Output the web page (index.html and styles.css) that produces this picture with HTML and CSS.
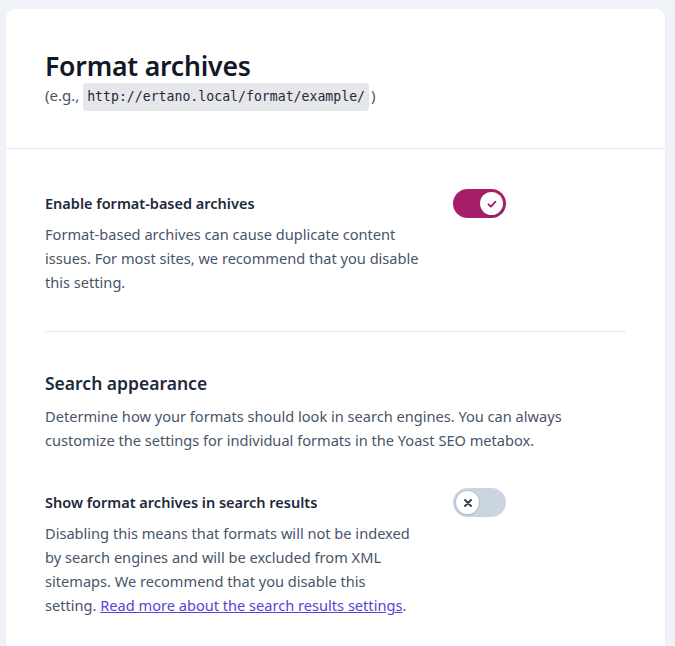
FILE: index.html
```html
<!DOCTYPE html>
<html lang="en">
<head>
<meta charset="utf-8">
<title>Format archives</title>
<link rel="stylesheet" href="styles.css">
</head>
<body>
<main class="card">
  <header class="card-header">
    <h1 class="title">Format archives</h1>
    <p class="subtitle">(e.g., <code class="code">http://ertano.local/format/example/</code>)</p>
  </header>
  <div class="card-body">
    <div class="setting">
      <div class="setting-text">
        <h3 class="setting-label">Enable format-based archives</h3>
        <p class="setting-desc">Format-based archives can cause duplicate content issues. For most sites, we recommend that you disable this setting.</p>
      </div>
      <button class="toggle toggle-on" type="button" aria-pressed="true">
        <span class="knob">
          <svg viewBox="0 0 12 12" width="12" height="12"><path d="M2.5 6.3 L4.9 8.6 L9.5 3.6" fill="none" stroke="#a61e69" stroke-width="1.8" stroke-linecap="round" stroke-linejoin="round"/></svg>
        </span>
      </button>
    </div>
    <hr class="divider">
    <section class="group">
      <h2 class="group-title">Search appearance</h2>
      <p class="group-desc">Determine how your formats should look in search engines. You can always customize the settings for individual formats in the Yoast SEO metabox.</p>
    </section>
    <div class="setting setting-second">
      <div class="setting-text">
        <h3 class="setting-label">Show format archives in search results</h3>
        <p class="setting-desc">Disabling this means that formats will not be indexed by search engines and will be excluded from XML sitemaps. We recommend that you disable this setting. <a class="link" href="#">Read more about the search results settings</a>.</p>
      </div>
      <button class="toggle toggle-off" type="button" aria-pressed="false">
        <span class="knob knob-off">
          <svg viewBox="0 0 12 12" width="12" height="12"><path d="M3 3 L9 9 M9 3 L3 9" fill="none" stroke="#334155" stroke-width="2" stroke-linecap="round"/></svg>
        </span>
      </button>
    </div>
  </div>
</main>
</body>
</html>
```
FILE: styles.css
```css
* { box-sizing: border-box; }
html, body { height: 100%; }
body {
  margin: 0;
  background: #eff2f7;
  padding: 9px 10px 0 6px;
  font-family: "Noto Sans", "Open Sans", sans-serif;
  color: #475569;
  overflow: hidden;
}
.card {
  background: #fff;
  border-radius: 9px;
  box-shadow: 0 1px 2px rgba(15, 23, 42, 0.06);
  min-height: 700px;
}
.card-header {
  height: 140px;
  padding: 42px 39px 0;
  border-bottom: 1px solid #e5e7eb;
}
.title {
  margin: 0;
  font-size: 26.6px;
  line-height: 30px;
  font-weight: 600;
  color: #111827;
  letter-spacing: -0.2px;
}
.subtitle {
  margin: 0;
  font-size: 15px;
  line-height: 28px;
  color: #4b5563;
}
.code {
  font-family: "DejaVu Sans Mono", "Liberation Mono", monospace;
  font-size: 13.2px;
  background: #e5e7eb;
  color: #1f2937;
  border-radius: 4px;
  padding: 6px 4px 7px;
  margin-right: 2px;
}
.card-body {
  padding: 43px 39px 0;
}
.setting {
  display: flex;
  align-items: flex-start;
}
.setting-text {
  width: 408px;
}
.setting-label {
  margin: 0 0 8px;
  font-size: 14.5px;
  line-height: 22px;
  font-weight: 600;
  color: #1e293b;
}
.setting-desc {
  width: 375px;
  margin: 0;
  font-size: 14.6px;
  line-height: 24px;
  color: #475569;
}
.toggle {
  margin: -3px 0 0 0;
  width: 53px;
  height: 29px;
  border: 0;
  border-radius: 15px;
  padding: 3px;
  display: flex;
  align-items: center;
  cursor: pointer;
}
.toggle-on {
  background: #a61e69;
  justify-content: flex-end;
}
.toggle-off {
  background: #cbd5e1;
  justify-content: flex-start;
}
.knob {
  width: 23px;
  height: 23px;
  border-radius: 50%;
  background: #fff;
  display: flex;
  align-items: center;
  justify-content: center;
  box-shadow: 0 1px 2px rgba(0, 0, 0, 0.12);
}
.knob-off {
  box-shadow: 0 0 0 1px rgba(148, 163, 184, 0.35), 0 1px 2px rgba(0, 0, 0, 0.12);
}
.divider {
  border: 0;
  border-top: 1px solid #e5e7eb;
  margin: 37px 0 38px;
}
.group-title {
  margin: 0 0 8px;
  font-size: 17.5px;
  line-height: 26px;
  font-weight: 600;
  color: #1e293b;
}
.group-desc {
  margin: 0;
  font-size: 14.6px;
  line-height: 24px;
  color: #475569;
}
.setting-second {
  margin-top: 39px;
}
.link {
  color: #5046d6;
  text-decoration: underline;
}
```
